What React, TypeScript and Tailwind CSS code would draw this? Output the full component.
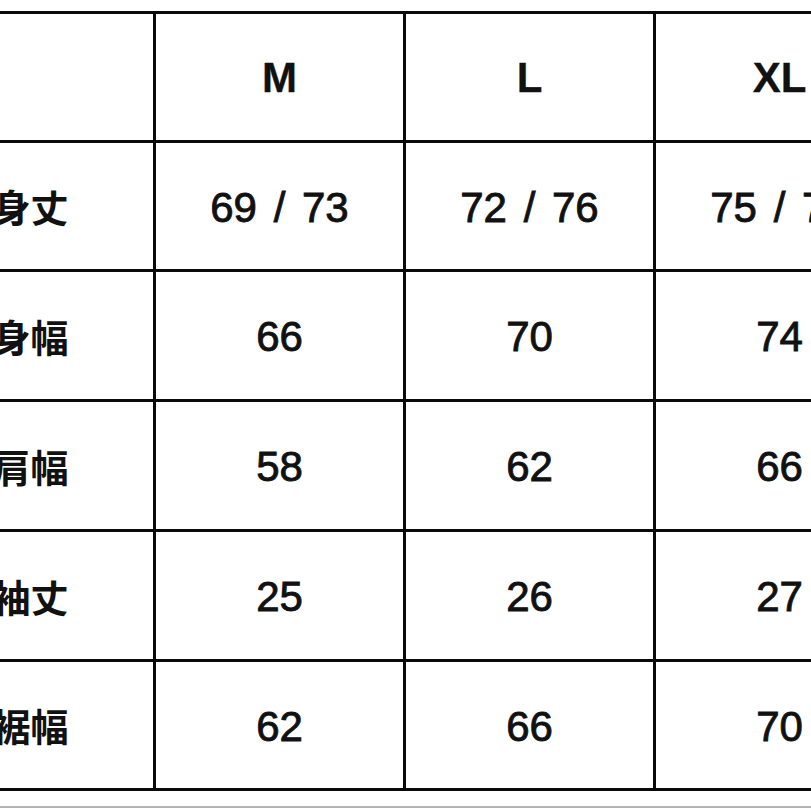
import React from "react";

const sizes = ["M", "L", "XL", "XXL"];
const rows: { label: string; values: string[] }[] = [
  { label: "身丈", values: ["69 / 73", "72 / 76", "75 / 79", "78 / 82"] },
  { label: "身幅", values: ["66", "70", "74", "78"] },
  { label: "肩幅", values: ["58", "62", "66", "70"] },
  { label: "袖丈", values: ["25", "26", "27", "28"] },
  { label: "裾幅", values: ["62", "66", "70", "74"] },
];

const num = "font-['Liberation_Sans',Arial,sans-serif] text-[42px] leading-none text-[#111] [word-spacing:5px] [-webkit-text-stroke:0.9px_#111]";
const cjk = "font-['Noto_Sans_CJK_JP','Noto_Sans_CJK_SC',sans-serif] font-semibold text-[38px] leading-none text-[#111]";

export default function App() {
  return (
    <div className="w-[811px] h-[811px] overflow-hidden bg-white flex flex-col">
      <div className="pt-[11px] ml-[-97px]">
        <div className="grid grid-cols-[247px_247px_247px_247px_247px] grid-rows-[126px_126px_127px_127px_127px_126px] gap-[3px] p-[3px] bg-[#0a0a0a] w-max">
          <div className="bg-white" />
          {sizes.map((s) => (
            <div key={s} className="bg-white flex items-center justify-center pt-[2px]">
              <span className="font-['Liberation_Sans',Arial,sans-serif] font-bold text-[42px] leading-none text-[#111] [-webkit-text-stroke:0.3px_#111]">{s}</span>
            </div>
          ))}
          {rows.map((r) => (
            <React.Fragment key={r.label}>
              <div className="bg-white flex items-center justify-center pl-[2px]">
                <span className={cjk}>{r.label}</span>
              </div>
              {r.values.map((v, i) => (
                <div key={i} className="bg-white flex items-center justify-center pt-[3px]">
                  <span className={num}>{v}</span>
                </div>
              ))}
            </React.Fragment>
          ))}
        </div>
      </div>
      <div className="mt-[15px] h-[2px] w-full bg-[#b4b4b4]" />
    </div>
  );
}
